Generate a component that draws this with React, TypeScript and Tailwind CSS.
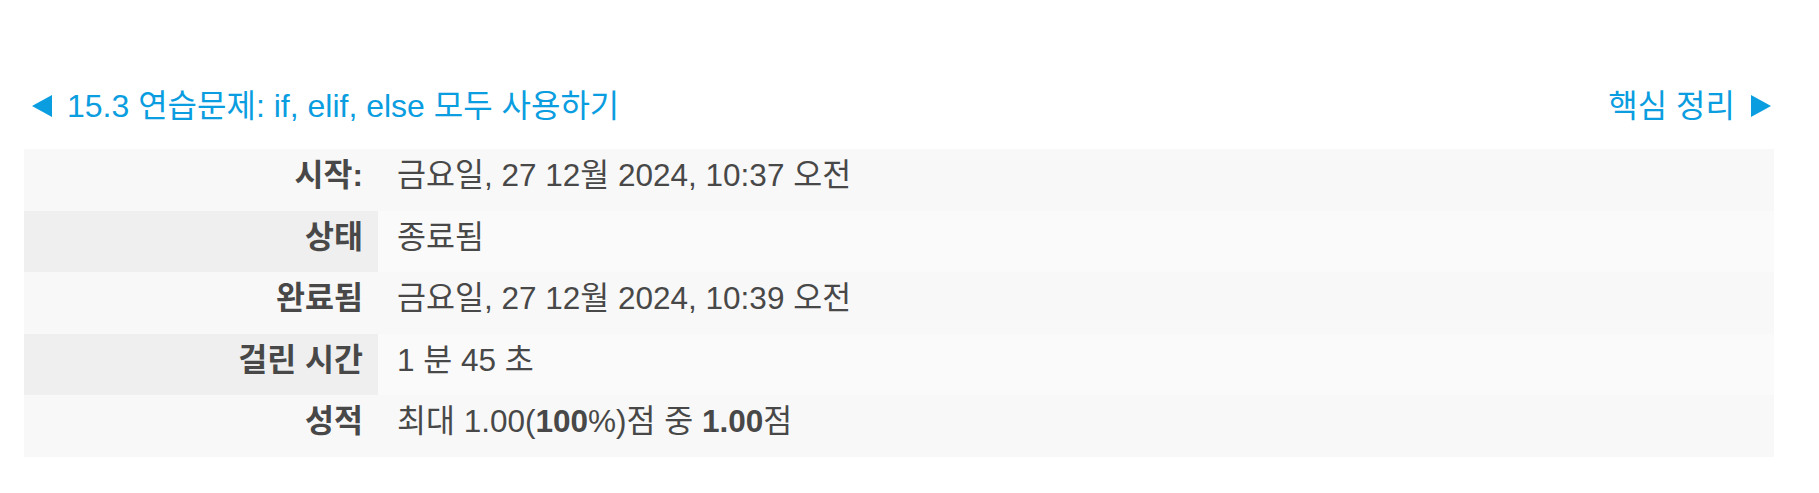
import type { ReactNode } from "react";

type Row = {
  label: string;
  value: ReactNode;
};

const rows: Row[] = [
  { label: "시작:", value: "금요일, 27 12월 2024, 10:37 오전" },
  { label: "상태", value: "종료됨" },
  { label: "완료됨", value: "금요일, 27 12월 2024, 10:39 오전" },
  { label: "걸린 시간", value: "1 분 45 초" },
  {
    label: "성적",
    value: (
      <>
        최대 1.00(<b>100</b>%)점 중 <b>1.00</b>점
      </>
    ),
  },
];

function TriangleLeft() {
  return (
    <svg width="20" height="22" viewBox="0 0 20 22" className="shrink-0">
      <path d="M20 0 L20 22 L0 11 Z" fill="currentColor" />
    </svg>
  );
}

function TriangleRight() {
  return (
    <svg width="20" height="22" viewBox="0 0 20 22" className="shrink-0">
      <path d="M0 0 L0 22 L20 11 Z" fill="currentColor" />
    </svg>
  );
}

export default function App() {
  return (
    <div
      className="min-h-[493px] bg-white pl-[24px] pr-[45px] pt-[84px] text-[31.5px] text-[#484848]"
      style={{ fontFamily: '"Liberation Sans", Arial, "Noto Sans CJK KR", sans-serif' }}
    >
      <div className="flex h-[44px] items-center justify-between text-[32px] text-[#0a9de0]">
        <a className="flex items-center gap-[15px] pl-[8px]" href="#">
          <TriangleLeft />
          <span>15.3 연습문제: if, elif, else 모두 사용하기</span>
        </a>
        <a className="flex items-center gap-[16px] pr-[3px]" href="#">
          <span>핵심 정리</span>
          <TriangleRight />
        </a>
      </div>
      <div className="mt-[21px] flex flex-col">
        {rows.map((row, i) => (
          <div key={row.label} className="flex h-[61.5px] bg-[#f8f8f8]">
            <div
              className={`w-[354px] shrink-0 pr-[15px] pt-[4px] text-right font-bold leading-[44px] ${
                i % 2 === 1 ? "bg-[#efefef]" : "bg-[#f8f8f8]"
              }`}
            >
              {row.label}
            </div>
            <div
              className={`flex-1 pl-[19px] pt-[4px] leading-[44px] ${
                i % 2 === 1 ? "bg-[#fafafa]" : "bg-[#f8f8f8]"
              }`}
            >
              {row.value}
            </div>
          </div>
        ))}
      </div>
    </div>
  );
}
